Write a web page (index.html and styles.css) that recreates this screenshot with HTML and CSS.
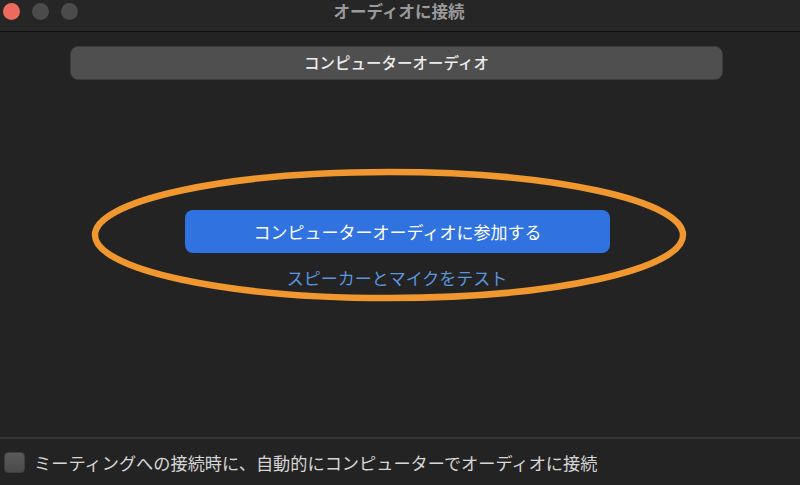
FILE: index.html
```html
<!DOCTYPE html>
<html lang="ja">
<head>
    <meta charset="utf-8">
    <title>オーディオに接続</title>
    <link rel="stylesheet" href="styles.css">
</head>
<body>
    <div class="window">
        <div class="titlebar">
            <div class="lights">
                <span class="light red"></span>
                <span class="light"></span>
                <span class="light"></span>
            </div>
            <div class="title">オーディオに接続</div>
        </div>

        <div class="tabs">
            <div class="tab active">コンピューターオーディオ</div>
        </div>

        <div class="main">
            <button class="join">コンピューターオーディオに参加する</button>
            <a class="test" href="#">スピーカーとマイクをテスト</a>

            <!-- 注釈の楕円 -->
            <svg class="mark" width="800" height="485" viewBox="0 0 800 485">
                <ellipse cx="389" cy="235" rx="294" ry="63" fill="none" stroke="#f0982f" stroke-width="6.5"/>
            </svg>
        </div>

        <div class="footer">
            <label class="auto">
                <span class="check"></span>
                ミーティングへの接続時に、自動的にコンピューターでオーディオに接続
            </label>
        </div>
    </div>
</body>
</html>
```

FILE: styles.css
```css
body {
    margin: 0;
    background-color: #232323;
    font-family: "Noto Sans CJK JP", "Noto Sans", sans-serif;
    overflow: hidden;
}

.window {
    position: relative;
    width: 800px;
    height: 485px;
    display: flex;
    flex-direction: column;
}

.titlebar {
    height: 31px;
    border-bottom: 1px solid #0f0f0f;
    display: flex;
    align-items: center;
    justify-content: center;
    position: relative;
    background-color: #262626;
}

.lights {
    position: absolute;
    left: 3px;
    top: 3px;
    display: flex;
    gap: 12px;
}

.light {
    width: 17px;
    height: 17px;
    border-radius: 50%;
    background-color: #4b4b4b;
}

.light.red {
    background-color: #ee6a5f;
}

.title {
    color: #9a9a9a;
    font-size: 16.5px;
    font-weight: bold;
    margin-top: -10px;
    margin-left: -2px;
}

.tabs {
    margin: 14px 77px 0 70px;
    height: 32px;
    background-color: #4f4f4f;
    border: 1px solid #3c3c3c;
    border-radius: 8px;
    display: flex;
}

.tab {
    flex: 1;
    text-align: center;
    color: #ececec;
    font-size: 15.5px;
    font-weight: 500;
    line-height: 31px;
}

.main {
    flex: 1;
    display: flex;
    flex-direction: column;
    align-items: center;
    padding-top: 130px;
}

.join {
    width: 425px;
    height: 43px;
    margin-left: -5px;
    background-color: #2f72e0;
    color: #fff;
    border: none;
    border-radius: 8px;
    font-family: inherit;
    font-size: 17px;
    cursor: pointer;
}

.test {
    margin-top: 12px;
    margin-left: -6px;
    color: #5b95dc;
    font-size: 17px;
    text-decoration: none;
}

.mark {
    position: absolute;
    left: 0;
    top: 0;
    pointer-events: none;
}

.footer {
    height: 46px;
    border-top: 2px solid #363636;
    display: flex;
    align-items: center;
    padding-left: 4px;
}

.auto {
    display: flex;
    align-items: center;
    gap: 9px;
    color: #d6d6d6;
    font-size: 17.2px;
}

.check {
    width: 19px;
    height: 19px;
    border-radius: 4px;
    border: 1px solid #3e3e3e;
    background: linear-gradient(#5a5a5a, #4a4a4a);
}
```
